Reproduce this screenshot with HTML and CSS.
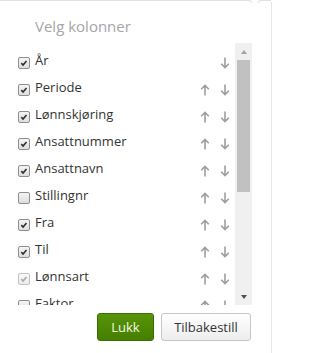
FILE: index.html
```html
<!DOCTYPE html>
<html lang="no">
<head>
<meta charset="utf-8">
<title>Velg kolonner</title>
<link rel="stylesheet" href="styles.css">
</head>
<body>
<div class="panel">
  <div class="edge"><span class="edge-left"></span><span class="edge-right"></span></div>
  <h2 class="title">Velg kolonner</h2>
  <div class="list-wrap">
    <ul class="list">
      <li class="row"><span class="cb checked"><svg viewBox="0 0 12 12"><path d="M2.8 6.2L4.9 8.4L9 3.6"/></svg></span><span class="label">År</span><span class="arr hidden"><svg viewBox="0 0 10 12"><path d="M5 11.5V1.5M1.2 5.3L5 1.5L8.8 5.3"/></svg></span><span class="arr"><svg viewBox="0 0 10 12"><path d="M5 0.5V10.5M1.2 6.7L5 10.5L8.8 6.7"/></svg></span></li>
      <li class="row"><span class="cb checked"><svg viewBox="0 0 12 12"><path d="M2.8 6.2L4.9 8.4L9 3.6"/></svg></span><span class="label">Periode</span><span class="arr"><svg viewBox="0 0 10 12"><path d="M5 11.5V1.5M1.2 5.3L5 1.5L8.8 5.3"/></svg></span><span class="arr"><svg viewBox="0 0 10 12"><path d="M5 0.5V10.5M1.2 6.7L5 10.5L8.8 6.7"/></svg></span></li>
      <li class="row"><span class="cb checked"><svg viewBox="0 0 12 12"><path d="M2.8 6.2L4.9 8.4L9 3.6"/></svg></span><span class="label">Lønnskjøring</span><span class="arr"><svg viewBox="0 0 10 12"><path d="M5 11.5V1.5M1.2 5.3L5 1.5L8.8 5.3"/></svg></span><span class="arr"><svg viewBox="0 0 10 12"><path d="M5 0.5V10.5M1.2 6.7L5 10.5L8.8 6.7"/></svg></span></li>
      <li class="row"><span class="cb checked"><svg viewBox="0 0 12 12"><path d="M2.8 6.2L4.9 8.4L9 3.6"/></svg></span><span class="label">Ansattnummer</span><span class="arr"><svg viewBox="0 0 10 12"><path d="M5 11.5V1.5M1.2 5.3L5 1.5L8.8 5.3"/></svg></span><span class="arr"><svg viewBox="0 0 10 12"><path d="M5 0.5V10.5M1.2 6.7L5 10.5L8.8 6.7"/></svg></span></li>
      <li class="row"><span class="cb checked"><svg viewBox="0 0 12 12"><path d="M2.8 6.2L4.9 8.4L9 3.6"/></svg></span><span class="label">Ansattnavn</span><span class="arr"><svg viewBox="0 0 10 12"><path d="M5 11.5V1.5M1.2 5.3L5 1.5L8.8 5.3"/></svg></span><span class="arr"><svg viewBox="0 0 10 12"><path d="M5 0.5V10.5M1.2 6.7L5 10.5L8.8 6.7"/></svg></span></li>
      <li class="row"><span class="cb"></span><span class="label">Stillingnr</span><span class="arr"><svg viewBox="0 0 10 12"><path d="M5 11.5V1.5M1.2 5.3L5 1.5L8.8 5.3"/></svg></span><span class="arr"><svg viewBox="0 0 10 12"><path d="M5 0.5V10.5M1.2 6.7L5 10.5L8.8 6.7"/></svg></span></li>
      <li class="row"><span class="cb checked"><svg viewBox="0 0 12 12"><path d="M2.8 6.2L4.9 8.4L9 3.6"/></svg></span><span class="label">Fra</span><span class="arr"><svg viewBox="0 0 10 12"><path d="M5 11.5V1.5M1.2 5.3L5 1.5L8.8 5.3"/></svg></span><span class="arr"><svg viewBox="0 0 10 12"><path d="M5 0.5V10.5M1.2 6.7L5 10.5L8.8 6.7"/></svg></span></li>
      <li class="row"><span class="cb checked"><svg viewBox="0 0 12 12"><path d="M2.8 6.2L4.9 8.4L9 3.6"/></svg></span><span class="label">Til</span><span class="arr"><svg viewBox="0 0 10 12"><path d="M5 11.5V1.5M1.2 5.3L5 1.5L8.8 5.3"/></svg></span><span class="arr"><svg viewBox="0 0 10 12"><path d="M5 0.5V10.5M1.2 6.7L5 10.5L8.8 6.7"/></svg></span></li>
      <li class="row"><span class="cb checked disabled"><svg viewBox="0 0 12 12"><path d="M2.8 6.2L4.9 8.4L9 3.6"/></svg></span><span class="label">Lønnsart</span><span class="arr"><svg viewBox="0 0 10 12"><path d="M5 11.5V1.5M1.2 5.3L5 1.5L8.8 5.3"/></svg></span><span class="arr"><svg viewBox="0 0 10 12"><path d="M5 0.5V10.5M1.2 6.7L5 10.5L8.8 6.7"/></svg></span></li>
      <li class="row"><span class="cb"></span><span class="label">Faktor</span><span class="arr"><svg viewBox="0 0 10 12"><path d="M5 11.5V1.5M1.2 5.3L5 1.5L8.8 5.3"/></svg></span><span class="arr"><svg viewBox="0 0 10 12"><path d="M5 0.5V10.5M1.2 6.7L5 10.5L8.8 6.7"/></svg></span></li>
    </ul>
    <div class="scrollbar">
      <div class="sb-btn"><span class="tri up"></span></div>
      <div class="sb-track"><div class="sb-thumb"></div></div>
      <div class="sb-btn"><span class="tri down"></span></div>
    </div>
  </div>
  <div class="actions">
    <button class="btn btn-primary">Lukk</button>
    <button class="btn btn-default">Tilbakestill</button>
  </div>
</div>
</body>
</html>
```

FILE: styles.css
```css
html, body {
  margin: 0;
  padding: 0;
  background: #ffffff;
}

body {
  font-family: "Open Sans", "DejaVu Sans", sans-serif;
  color: #333333;
}

.panel {
  box-sizing: border-box;
  width: 272px;
  height: 353px;
  border-right: 1px solid #e6e6e6;
  border-top-right-radius: 4px;
  display: flex;
  flex-direction: column;
}

.edge {
  display: flex;
  height: 3px;
}

.edge-left {
  width: 252px;
  box-sizing: border-box;
  border-top: 1px solid #e2e2e2;
  border-right: 1px solid #e2e2e2;
  border-top-right-radius: 3px;
}

.edge-right {
  flex: 1;
  margin-left: 6px;
  box-sizing: border-box;
  border-top: 1px solid #e2e2e2;
  border-left: 1px solid #e2e2e2;
  border-top-left-radius: 3px;
}

.title {
  margin: 13px 0 7px 0;
  padding-left: 35px;
  font-size: 15px;
  line-height: 20px;
  font-weight: normal;
  color: #a6a6a6;
}

.list-wrap {
  display: flex;
  width: 252px;
  height: 262px;
}

.list {
  flex: 1;
  margin: 0;
  padding: 3px 0 0 18px;
  list-style: none;
  overflow: hidden;
}

.row {
  display: flex;
  align-items: center;
  height: 27px;
  padding-right: 5px;
  font-size: 13px;
  color: #333333;
}

.cb {
  box-sizing: border-box;
  width: 12px;
  height: 12px;
  margin-top: 6px;
  border: 1px solid #8f8f8f;
  border-radius: 2px;
  background: linear-gradient(#f4f4f4, #dedede);
  display: flex;
  flex-shrink: 0;
}

.cb svg {
  width: 10px;
  height: 10px;
  fill: none;
  stroke: #2e2e2e;
  stroke-width: 1.9;
}

.cb.disabled {
  border-color: #c2c2c2;
  background: linear-gradient(#f8f8f8, #ececec);
}

.cb.disabled svg {
  stroke: #a9a9a9;
}

.label {
  flex: 1;
  margin-left: 5px;
  white-space: nowrap;
}

.arr {
  width: 10px;
  height: 12px;
  margin-top: 6px;
  margin-left: 10px;
  display: flex;
}

.arr svg {
  width: 10px;
  height: 12px;
  fill: none;
  stroke: #9b9ea3;
  stroke-width: 1.6;
}

.arr.hidden {
  visibility: hidden;
}

.scrollbar {
  width: 17px;
  background: #f0f0f0;
  display: flex;
  flex-direction: column;
}

.sb-btn {
  height: 17px;
  display: flex;
  align-items: center;
  justify-content: center;
}

.tri {
  width: 0;
  height: 0;
  border-left: 3.5px solid transparent;
  border-right: 3.5px solid transparent;
}

.tri.up {
  border-bottom: 4px solid #a3a3a3;
}

.tri.down {
  border-top: 4px solid #505050;
}

.sb-track {
  flex: 1;
}

.sb-thumb {
  height: 132px;
  margin: 0 2px;
  background: #c1c1c1;
}

.actions {
  display: flex;
  justify-content: flex-end;
  gap: 7px;
  margin-top: 8px;
  padding-right: 20px;
}

.btn {
  box-sizing: border-box;
  height: 28px;
  padding: 0;
  border-radius: 3px;
  font-family: "Open Sans", "DejaVu Sans", sans-serif;
  font-size: 13px;
}

.btn-primary {
  width: 57px;
  background: linear-gradient(#569409, #467f00);
  border: 1px solid #3c6d00;
  color: #f7f7e4;
}

.btn-default {
  width: 90px;
  background: linear-gradient(#ffffff, #ededed);
  border: 1px solid #c6c6c6;
  color: #333333;
}
```
